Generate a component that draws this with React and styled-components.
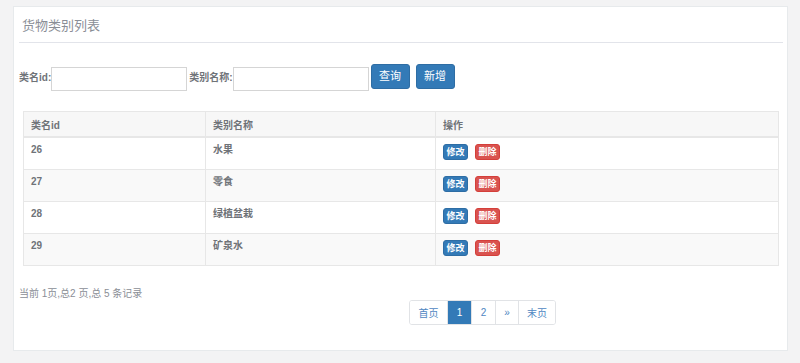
import React from "react";
import styled, { createGlobalStyle } from "styled-components";

const GlobalStyle = createGlobalStyle`
  html, body {
    margin: 0;
    padding: 0;
    background: #f3f3f4;
  }
  body {
    font-family: "Liberation Sans", "Noto Sans CJK SC", sans-serif;
    color: #676a6c;
  }
`;

const categories = [
  { id: 26, name: "水果" },
  { id: 27, name: "零食" },
  { id: 28, name: "绿植盆栽" },
  { id: 29, name: "矿泉水" },
];

export default function App() {
  return (
    <>
      <GlobalStyle />
      <Page>
        <Panel>
          <Title>货物类别列表</Title>
          <SearchForm>
            <Label>类名id:</Label>
            <Input />
            <Label>类别名称:</Label>
            <Input />
            <Button>查询</Button>
            <Button $gap>新增</Button>
          </SearchForm>
          <Table>
            <colgroup>
              <col style={{ width: 182 }} />
              <col style={{ width: 230 }} />
              <col />
            </colgroup>
            <thead>
              <tr>
                <Th>类名id</Th>
                <Th>类别名称</Th>
                <Th>操作</Th>
              </tr>
            </thead>
            <tbody>
              {categories.map((c, i) => (
                <Row key={c.id} $striped={i % 2 === 1}>
                  <Td>{c.id}</Td>
                  <Td>{c.name}</Td>
                  <Td>
                    <Actions>
                      <SmallButton $color="#337ab7" $border="#2e6da4">修改</SmallButton>
                      <SmallButton $color="#d9534f" $border="#d43f3a">删除</SmallButton>
                    </Actions>
                  </Td>
                </Row>
              ))}
            </tbody>
          </Table>
          <Footer>
            <Summary>当前 1页,总2 页,总 5 条记录</Summary>
            <Pagination>
              <PageItem $w={37}>首页</PageItem>
              <PageItem $w={24} $active>1</PageItem>
              <PageItem $w={24}>2</PageItem>
              <PageItem $w={23}>»</PageItem>
              <PageItem $w={37}>末页</PageItem>
            </Pagination>
          </Footer>
        </Panel>
      </Page>
    </>
  );
}

const Page = styled.div`
  padding: 6px 12px 13px 13px;
`;

const Panel = styled.div`
  background: #fff;
  border: 1px solid #e7eaec;
  padding: 0 4px 0 5px;
  display: flex;
  flex-direction: column;
`;

const Title = styled.h5`
  margin: 0;
  padding: 10px 0 7px 3px;
  font-size: 13px;
  line-height: 18px;
  font-weight: normal;
  color: #8a8e96;
  border-bottom: 1px solid #e2e4ea;
`;

const SearchForm = styled.div`
  display: flex;
  align-items: flex-start;
  margin-top: 21px;
`;

const Label = styled.label`
  font-size: 10px;
  font-weight: bold;
  line-height: 14px;
  margin-top: 7px;
  color: #6f7378;
`;

const Input = styled.input`
  box-sizing: border-box;
  width: 136px;
  height: 24px;
  margin-top: 3px;
  margin-right: 2px;
  border: 1px solid #d5d5d5;
  background: #fff;
  outline: none;
`;

const Button = styled.button`
  box-sizing: border-box;
  width: 39px;
  height: 25px;
  margin-left: ${(p) => (p.$gap ? "6px" : "0")};
  padding: 0;
  border: 1px solid #2e6da4;
  border-radius: 3px;
  background: #337ab7;
  color: #fff;
  font-family: inherit;
  font-size: 11px;
  line-height: 23px;
`;

const Table = styled.table`
  margin: 20px 4px 0 4px;
  width: 756px;
  border-collapse: collapse;
  table-layout: fixed;
  border: 1px solid #e7e7e7;
  font-size: 10px;
`;

const Th = styled.th`
  text-align: left;
  font-weight: bold;
  height: 24px;
  padding: 0 7px;
  background: #f7f7f7;
  border: 1px solid #e7e7e7;
  border-bottom: 2px solid #e7e7e7;
  color: #6f7378;
`;

const Row = styled.tr`
  background: ${(p) => (p.$striped ? "#f9f9f9" : "#fff")};
`;

const Td = styled.td`
  height: 32px;
  box-sizing: border-box;
  padding: 5px 7px 0 7px;
  vertical-align: top;
  line-height: 14px;
  font-weight: bold;
  border: 1px solid #e7e7e7;
  color: #6f7378;
`;

const Actions = styled.div`
  display: flex;
  gap: 7px;
  padding-top: 1px;
`;

const SmallButton = styled.span`
  box-sizing: border-box;
  width: 25px;
  height: 16px;
  display: inline-flex;
  align-items: center;
  justify-content: center;
  border: 1px solid ${(p) => p.$border};
  border-radius: 3px;
  background: ${(p) => p.$color};
  color: #fff;
  font-size: 9px;
  font-weight: bold;
`;

const Footer = styled.div`
  display: grid;
  grid-template-columns: 390px 1fr;
  margin-top: 21px;
  padding-bottom: 25px;
`;

const Summary = styled.div`
  font-size: 10px;
  line-height: 14px;
  color: #8a8e96;
`;

const Pagination = styled.div`
  display: flex;
  margin-top: 13px;
  border: 1px solid #e1e3e6;
  border-radius: 3px;
  justify-self: start;
  overflow: hidden;
`;

const PageItem = styled.span`
  box-sizing: border-box;
  width: ${(p) => p.$w}px;
  height: 23px;
  display: flex;
  align-items: center;
  justify-content: center;
  font-size: 10px;
  color: ${(p) => (p.$active ? "#fff" : "#4f87c2")};
  background: ${(p) => (p.$active ? "#337ab7" : "#fff")};
  & + & {
    border-left: 1px solid #e1e3e6;
  }
`;
